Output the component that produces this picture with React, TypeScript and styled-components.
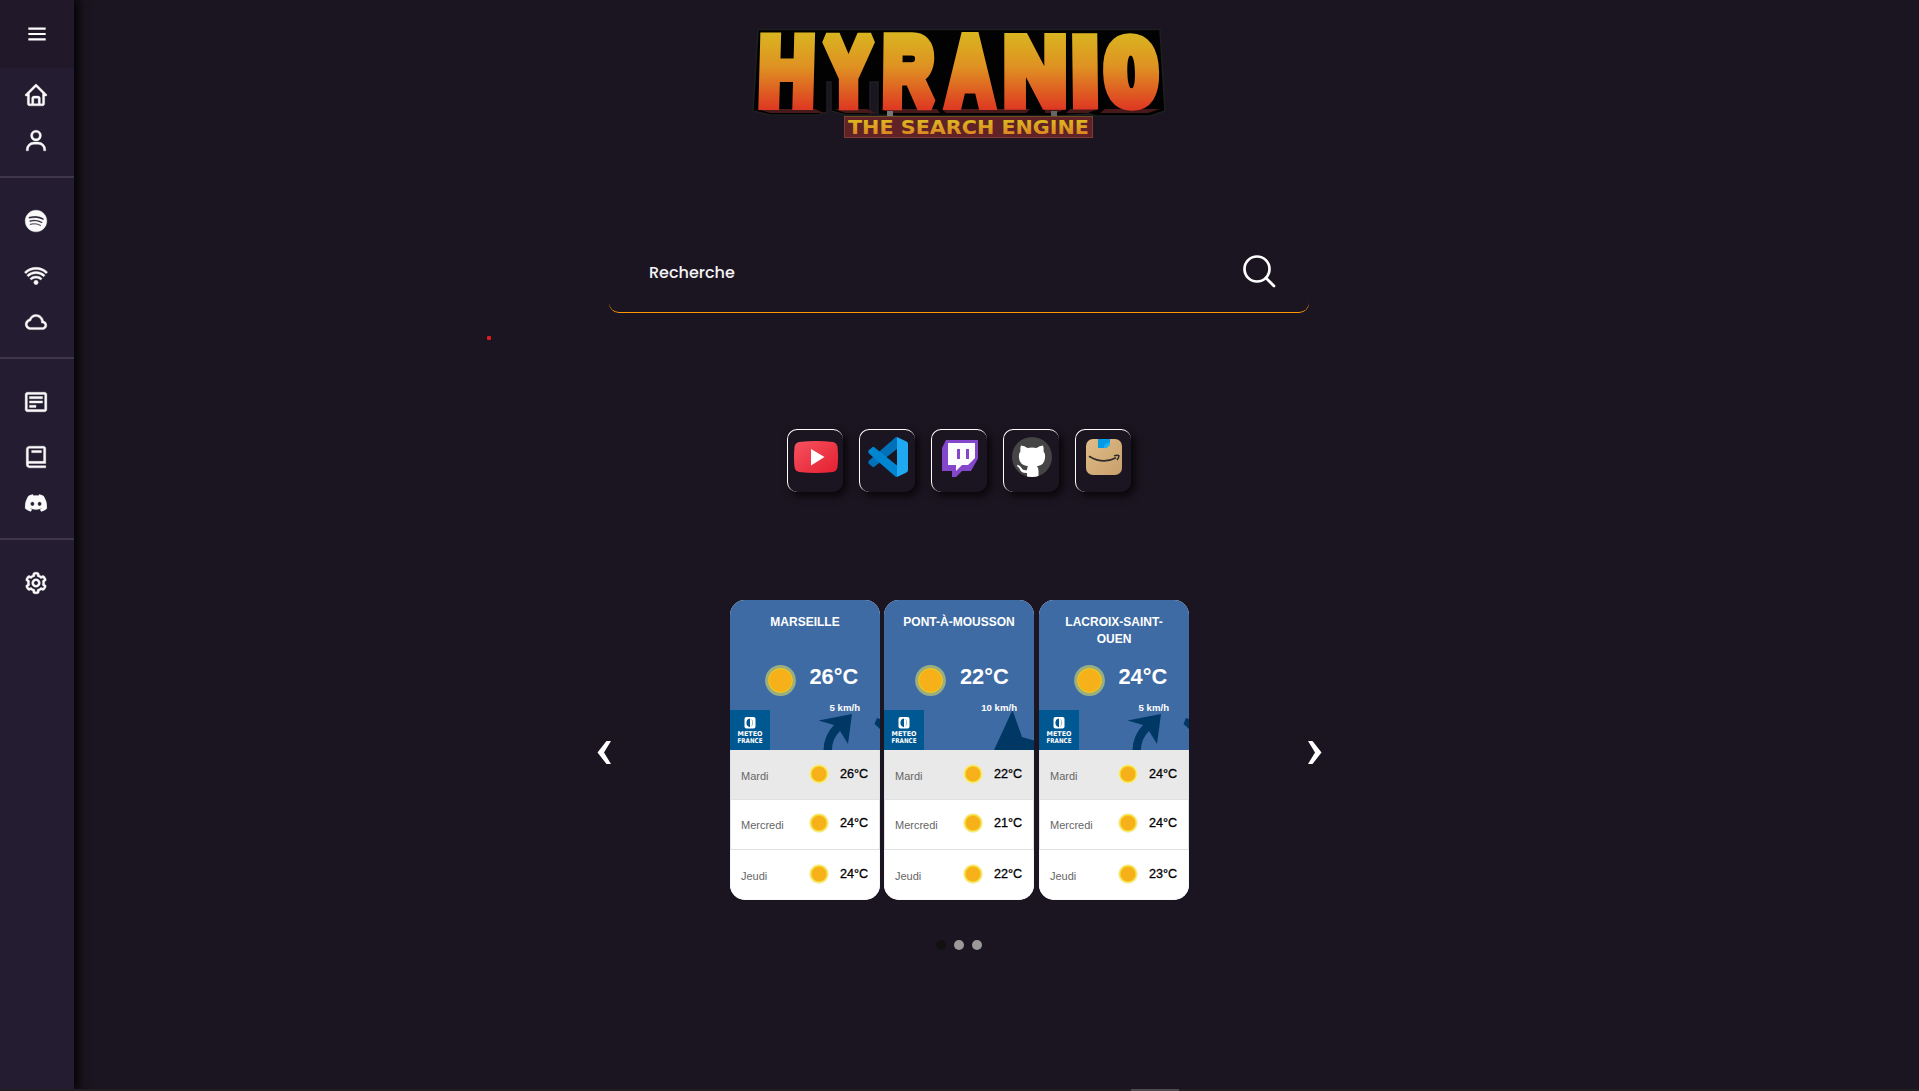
import React from "react";
import styled, { createGlobalStyle } from "styled-components";
import {
  BiMenu, BiHome, BiUser, BiLogoSpotify, BiWifi, BiCloud, BiDetail, BiBook, BiLogoDiscordAlt, BiCog,
} from "react-icons/bi";

const GlobalStyle = createGlobalStyle`
  * { box-sizing: border-box; }
  html, body { margin: 0; padding: 0; background: #1b1521; overflow: hidden; }
  body { font-family: "Liberation Sans", Arial, sans-serif; }
`;

const Page = styled.div`
  display: grid;
  grid-template-columns: 74px 1fr 75px;
  grid-template-rows: 1089px 2px;
  height: 1091px;
  background: #1b1521;
`;

const Sidebar = styled.aside`
  display: flex;
  flex-direction: column;
  background: #241c30;
  box-shadow: 3px 0 10px 2px rgba(0, 0, 0, 0.85);
`;

const MenuButton = styled.button`
  display: flex;
  align-items: center;
  justify-content: center;
  height: 68px;
  padding: 0;
  border: 0;
  background: #211829;
  color: #fff;
`;

const NavGroup = styled.nav<{ $first?: boolean }>`
  display: flex;
  flex-direction: column;
  height: ${(p) => (p.$first ? 110 : 181)}px;
  padding-top: ${(p) => (p.$first ? 4 : 16)}px;
  border-bottom: 2px solid #3e3648;
  &:last-child { border-bottom: 0; }
`;

const NavItem = styled.a<{ $gap?: number }>`
  display: flex;
  align-items: center;
  justify-content: center;
  height: 46px;
  margin-top: ${(p) => p.$gap ?? 0}px;
  padding-right: 2px;
  color: #fafafa;
  svg { stroke: #fafafa; stroke-width: 0.35px; }
`;

const Main = styled.main`
  display: flex;
  flex-direction: column;
  align-items: center;
`;

const Logo = styled.svg`
  display: block;
  width: 420px;
  height: 120px;
  margin-top: 24px;
`;

const SearchBox = styled.form`
  display: flex;
  align-items: center;
  justify-content: space-between;
  width: 700px;
  height: 80px;
  margin-top: 89px;
  padding: 0 33px 0 40px;
  border-bottom: 1px solid #ff9800;
  border-radius: 10px;
`;

const SearchLabel = styled.span`
  padding-top: 1px;
  font: 500 16px/24px Poppins, Inter, sans-serif;
  color: #f4f3f5;
`;

const SearchIcon = styled.svg`
  width: 34px;
  height: 34px;
  margin-bottom: 4px;
`;

const Shortcuts = styled.div`
  display: flex;
  gap: 16px;
  margin-top: 116px;
`;

const Shortcut = styled.a`
  display: flex;
  justify-content: center;
  width: 56px;
  height: 63px;
  padding: 7px 0 0 1px;
  border: 0 solid #fff;
  border-top-width: 1px;
  border-left-width: 1px;
  border-radius: 10px;
  background: #1b1521;
  box-shadow: 4px 4px 8px rgba(0, 0, 0, 0.75);
  svg { flex: none; width: 44px; height: 40px; }
`;

const Carousel = styled.section`
  display: flex;
  align-items: center;
  justify-content: space-between;
  width: 725px;
  margin: 108px 0 0 1px;
`;

const ArrowButton = styled.button`
  display: flex;
  padding: 4px 0 0;
  border: 0;
  background: none;
  svg { width: 15px; height: 25px; }
`;

const Cards = styled.div`
  display: grid;
  grid-template-columns: 154px 155px 150px;
  width: 459px;
`;

const Card = styled.article`
  display: flex;
  flex-direction: column;
  width: 150px;
  height: 300px;
  overflow: hidden;
  border-radius: 15px;
  background: #fff;
`;

const Today = styled.div`
  display: grid;
  grid-template-areas: "stack";
  height: 150px;
  background: #3e6ba4;
`;

const Backdrop = styled.svg`
  grid-area: stack;
  width: 150px;
  height: 150px;
`;

const TodayInfo = styled.div`
  grid-area: stack;
  display: flex;
  flex-direction: column;
  padding-top: 14px;
  color: #fff;
  font-weight: 700;
`;

const City = styled.h2`
  width: 126px;
  height: 34px;
  margin: 0 auto;
  font-size: 12px;
  line-height: 17px;
  text-align: center;
`;

const Current = styled.div<{ $wide?: boolean }>`
  display: flex;
  gap: 14px;
  height: 44px;
  padding: 15px 0 0 ${(p) => (p.$wide ? 31 : 34.5)}px;
  font-size: 21.8px;
  line-height: 28px;
  svg { flex: none; width: 31px; height: 31px; margin-top: 2px; }
`;

const Wind = styled.div<{ $wide?: boolean }>`
  height: 18px;
  padding: 10px ${(p) => (p.$wide ? 17 : 20)}px 0 0;
  font-size: 9.6px;
  line-height: 12px;
  text-align: right;
`;

const DayRow = styled.div<{ $active?: boolean }>`
  display: grid;
  grid-template-columns: 68px 31px 1fr;
  align-items: center;
  height: 50px;
  padding: 0 0 ${(p) => (p.$active ? 1 : 3)}px 10px;
  border: 1px solid #dfe1e3;
  border-top: 0;
  background: ${(p) => (p.$active ? "#e9e9e9" : "#fff")};
  &:last-child { border-color: #f4f6f8; border-radius: 0 0 15px 15px; padding-bottom: 1px; }
  svg { width: 20px; height: 20px; }
`;

const DayName = styled.span`
  padding-top: 3px;
  font-size: 11px;
  color: #666;
`;

const DayTemp = styled.span`
  font-size: 12.6px;
  color: #000;
  -webkit-text-stroke: 0.3px #000;
`;

const Dots = styled.div`
  display: flex;
  gap: 8px;
  margin-top: 40px;
`;

const Dot = styled.span<{ $on?: boolean }>`
  width: 10px;
  height: 10px;
  border-radius: 50%;
  background: ${(p) => (p.$on ? "#111" : "#999")};
`;

const Marker = styled.span`
  position: absolute;
  left: 487px;
  top: 336px;
  width: 4px;
  height: 4px;
  border-radius: 1px;
  background: #e01b20;
`;

const BottomEdge = styled.div`
  grid-column: 1 / -1;
  display: flex;
  padding-left: 1131px;
  background: #211f22;
  z-index: 1;
`;

const BottomHandle = styled.span`
  width: 48px;
  height: 2px;
  background: #504a50;
`;

/* x/w: ink box on the plate; l/r: ink bounds of the glyph in em units; k: slant. */
const letters = [
  { c: "H", x: 758, w: 56, l: 0.067, r: 0.655, k: -1.5 },
  { c: "Y", x: 821, w: 55, l: 0.022, r: 0.645, k: 0 },
  { c: "R", x: 882, w: 55, l: 0.067, r: 0.7, k: -0.7 },
  { c: "A", x: 942, w: 56, l: 0.005, r: 0.717, k: 0 },
  { c: "N", x: 1004, w: 62, l: 0.067, r: 0.653, k: 0 },
  { c: "I", x: 1073, w: 25, l: 0.067, r: 0.211, k: 0.7 },
  { c: "O", x: 1104, w: 56, l: 0.045, r: 0.557, k: 1.5, mono: true },
];
const STROKE = 11;

function HyranioLogo() {
  return (
    <Logo viewBox="749 24 420 120">
      <defs>
        <linearGradient id="fire" gradientUnits="userSpaceOnUse" x1="0" y1="-71" x2="0" y2="5">
          <stop offset="0" stopColor="#d9b520" />
          <stop offset="0.45" stopColor="#df9222" />
          <stop offset="1" stopColor="#de3a22" />
        </linearGradient>
        <linearGradient id="gold" gradientUnits="userSpaceOnUse" x1="0" y1="119" x2="0" y2="135">
          <stop offset="0" stopColor="#dcbb20" />
          <stop offset="1" stopColor="#dd8523" />
        </linearGradient>
      </defs>
      <path
        d="M758 29.500H1160L1165 111L1150 116H1096L1090 114L1060 116H900L878 115V82H870V115H846L831 111V82H827V112L818 115H770L753 111Z"
        fill="#020202" stroke="#1e1f20" strokeWidth="1.500"
      />
      <path
        d="M757 109H815L824 113H770ZM835 109H867L876 113H845ZM881 109H937L940 113H893ZM942 109H1030L1026 113H946ZM1045 109H1066L1056 113H1045ZM1070 109H1098L1088 113H1066ZM1105 109H1160L1148 113H1100Z"
        fill="#47191a"
      />
      {letters.map((l) => {
        const size = l.mono ? 88 : 95;
        const scale = (l.w - STROKE) / ((l.r - l.l) * size);
        const left = l.x + STROKE / 2 - l.l * size * scale;
        return (
          <g key={l.c} transform={`translate(${left} 103.500) skewX(${l.k}) scale(${scale} 1)`}>
            <text
              fontFamily={l.mono ? "DejaVu Sans Mono, monospace" : "Liberation Sans, Arial, sans-serif"}
              fontWeight="700"
              fontSize={size}
              fill="url(#fire)"
              stroke="url(#fire)"
              strokeWidth={STROKE}
              strokeLinejoin="miter"
              strokeMiterlimit="2"
              vectorEffect="non-scaling-stroke"
            >
              {l.c}
            </text>
          </g>
        );
      })}
      <rect x="887" y="111" width="6" height="6" fill="#777" />
      <rect x="1051" y="111" width="6" height="6" fill="#666" />
      <rect x="844.500" y="116.500" width="248" height="21" fill="#602226" stroke="#7c3c31" />
      <path d="M844 116.500H1093" stroke="#6d5021" />
      <text
        x="848" y="134" textLength="241" lengthAdjust="spacingAndGlyphs"
        fontFamily="DejaVu Sans, sans-serif" fontWeight="700" fontSize="19.500" fill="url(#gold)"
      >
        THE SEARCH ENGINE
      </text>
    </Logo>
  );
}

const YouTube = () => (
  <svg viewBox="0 0 44 40">
    <defs>
      <linearGradient id="yt" x1="0" y1="0" x2="1" y2="1">
        <stop offset="0" stopColor="#f7525f" /><stop offset="1" stopColor="#e41f30" />
      </linearGradient>
    </defs>
    <path d="M5 5Q22 3 39 5Q43 6 43.500 10Q44.500 20 43.500 30Q43 34 39 35Q22 37 5 35Q1 34 .5 30Q-.5 20 .5 10Q1 6 5 5Z" fill="url(#yt)" />
    <path d="M17 12L30.500 20L17 28.500Z" fill="#fff" />
  </svg>
);

const VSCode = () => (
  <svg viewBox="0 0 44 40">
    <path d="M31 0V12L8 30Q7 30.500 6 29.500L2.500 26.500Q1.500 25 3 23.500L29 .7Q30 0 31 0Z" fill="#0071b8" />
    <path d="M31 40V28.500L8 10Q7 9.500 6 10.500L2.500 13.500Q1.500 15 3 16.500L29 39.300Q30 40 31 40Z" fill="#0086d1" />
    <path d="M31 0L40.500 4.500Q42 5.200 42 7V33Q42 34.800 40.500 35.500L31 40Z" fill="#1fa9f1" />
  </svg>
);

const Twitch = () => (
  <svg viewBox="0 0 44 40">
    <path d="M8 3H40V21.500L33 34H24L18 40H14V34H4V11Z" fill="#8447cc" />
    <path d="M10 6H37V21L30 28H24L18 34V28H10Z" fill="#fcfcfc" />
    <path d="M19 12H22V22H19ZM28 12H31V22H28Z" fill="#8447cc" />
  </svg>
);

const GitHubBadge = () => (
  <svg viewBox="0 0 44 40">
    <clipPath id="disc"><circle cx="22" cy="20" r="20" /></clipPath>
    <circle cx="22" cy="20" r="20" fill="#454545" />
    <path
      d="M11 8.500Q14.500 8.500 17.500 11Q22 10 26.500 11Q29.500 8.500 33 8.500Q34 11 33.500 14Q35.500 17 35 21Q34.500 28 27 29.300Q28.500 31 28.500 33.500V41H17V36Q11 36.500 9.500 31.500Q8.500 30 7 29L7.500 27.800Q10.500 28.500 11.500 31Q13 33.800 17 33Q17 30.800 18 29.300Q9.500 28 9 21Q8.500 17 10.500 14Q10 11 11 8.500Z"
      fill="#fff" clipPath="url(#disc)"
    />
  </svg>
);

const Amazon = () => (
  <svg viewBox="0 0 44 40">
    <defs>
      <linearGradient id="box" x1="0" y1="0" x2="1" y2="1">
        <stop offset="0" stopColor="#dfbd89" /><stop offset="1" stopColor="#c89f69" />
      </linearGradient>
    </defs>
    <rect x="4" y="2" width="36" height="36" rx="7" fill="url(#box)" />
    <path d="M16 2H28V5L23 11H16Z" fill="#069ae4" />
    <path d="M28 5V8L24.500 11H22Q21 7 28 5Z" fill="#1bb0f2" />
    <path d="M7.500 19.500Q21 27.500 33.500 21" fill="none" stroke="#2d2b2b" strokeWidth="1.600" strokeLinecap="round" />
    <path d="M32 18.700Q36 17.700 37 18.700Q37 20.500 35 23" fill="none" stroke="#2d2b2b" strokeWidth="1.400" />
  </svg>
);

const SunLarge = () => (
  <svg viewBox="0 0 31 31">
    <circle cx="15.500" cy="15.500" r="15.400" fill="#9aae80" />
    <circle cx="15.500" cy="15.500" r="11.900" fill="#f6b01a" stroke="#f3cf16" strokeWidth="1" />
  </svg>
);

const SunSmall = () => (
  <svg viewBox="0 0 20 20">
    <circle cx="10" cy="10" r="9.800" fill="#f3eda0" />
    <circle cx="10" cy="10" r="7.900" fill="#f6b01a" stroke="#f8d928" strokeWidth="1.200" />
  </svg>
);

function CardBackdrop({ strong }: { strong?: boolean }) {
  return (
    <Backdrop viewBox="0 0 150 150">
      {strong ? (
        <path d="M128.500 110L138 137L150 140.500V150H110Z" fill="#003865" />
      ) : (
        <>
          <path d="M88.500 120.500L122 114L118 144L110 131Q102 139 102 150H93.500Q94 135 104 125Z" fill="#003865" />
          <path d="M147 118L150 119V129L144.500 124Z" fill="#003865" />
        </>
      )}
      <rect y="110" width="40" height="40" fill="#005892" />
      <rect x="14.500" y="117" width="11" height="11.500" rx="2" fill="#fff" />
      <path d="M20 118.500A4.200 4.400 0 0 0 20 127.200ZM21 118.500A6 6 0 0 1 21 127.200A8 8 0 0 0 21 118.500" fill="#005892" />
      <g fill="#fff" fontFamily="DejaVu Sans, sans-serif" fontWeight="700" fontSize="6.600">
        <text x="7.500" y="135.900" textLength="25" lengthAdjust="spacingAndGlyphs">METEO</text>
        <text x="7.500" y="142.600" textLength="25" lengthAdjust="spacingAndGlyphs">FRANCE</text>
      </g>
    </Backdrop>
  );
}

const forecasts = [
  { city: "MARSEILLE", now: "26", wind: "5", days: ["26", "24", "24"], strong: false },
  { city: "PONT-À-MOUSSON", now: "22", wind: "10", days: ["22", "21", "22"], strong: true },
  { city: "LACROIX-SAINT-OUEN", now: "24", wind: "5", days: ["24", "24", "23"], strong: false },
];
const dayNames = ["Mardi", "Mercredi", "Jeudi"];

export default function App() {
  return (
    <>
      <GlobalStyle />
      <Page>
        <Sidebar>
          <MenuButton><BiMenu size={26} /></MenuButton>
          <NavGroup $first>
            <NavItem><BiHome size={26} /></NavItem>
            <NavItem><BiUser size={26} /></NavItem>
          </NavGroup>
          <NavGroup>
            <NavItem $gap={4}><BiLogoSpotify size={26} /></NavItem>
            <NavItem $gap={9}><BiWifi size={26} /></NavItem>
            <NavItem><BiCloud size={26} /></NavItem>
          </NavGroup>
          <NavGroup>
            <NavItem $gap={4}><BiDetail size={26} /></NavItem>
            <NavItem $gap={9}><BiBook size={26} /></NavItem>
            <NavItem><BiLogoDiscordAlt size={26} /></NavItem>
          </NavGroup>
          <NavGroup>
            <NavItem $gap={4}><BiCog size={26} /></NavItem>
          </NavGroup>
        </Sidebar>
        <Main>
          <HyranioLogo />
          <SearchBox>
            <SearchLabel>Recherche</SearchLabel>
            <SearchIcon viewBox="0 0 34 34" fill="none" stroke="#fff" strokeWidth="2.700" strokeLinecap="round">
              <circle cx="15" cy="15" r="12.500" />
              <path d="M24 24L32 32" />
            </SearchIcon>
          </SearchBox>
          <Shortcuts>
            <Shortcut><YouTube /></Shortcut>
            <Shortcut><VSCode /></Shortcut>
            <Shortcut><Twitch /></Shortcut>
            <Shortcut><GitHubBadge /></Shortcut>
            <Shortcut><Amazon /></Shortcut>
          </Shortcuts>
          <Carousel>
            <ArrowButton>
              <svg viewBox="0 0 15 25"><path d="M9.500 1H14L7 12.500L14 24H9.500L.5 12.500Z" fill="#fff" /></svg>
            </ArrowButton>
            <Cards>
              {forecasts.map((f) => (
                <Card key={f.city}>
                  <Today>
                    <CardBackdrop strong={f.strong} />
                    <TodayInfo>
                      <City>{f.city}</City>
                      <Current $wide={f.wind.length > 1}><SunLarge /><span>{f.now}°C</span></Current>
                      <Wind $wide={f.wind.length > 1}>{f.wind} km/h</Wind>
                    </TodayInfo>
                  </Today>
                  {f.days.map((t, i) => (
                    <DayRow key={dayNames[i]} $active={i === 0}>
                      <DayName>{dayNames[i]}</DayName>
                      <SunSmall />
                      <DayTemp>{t}°C</DayTemp>
                    </DayRow>
                  ))}
                </Card>
              ))}
            </Cards>
            <ArrowButton>
              <svg viewBox="0 0 15 25"><path d="M5.500 1H1L8 12.500L1 24H5.500L14.500 12.500Z" fill="#fff" /></svg>
            </ArrowButton>
          </Carousel>
          <Dots><Dot $on /><Dot /><Dot /></Dots>
        </Main>
        <BottomEdge><BottomHandle /></BottomEdge>
        <Marker />
      </Page>
    </>
  );
}
